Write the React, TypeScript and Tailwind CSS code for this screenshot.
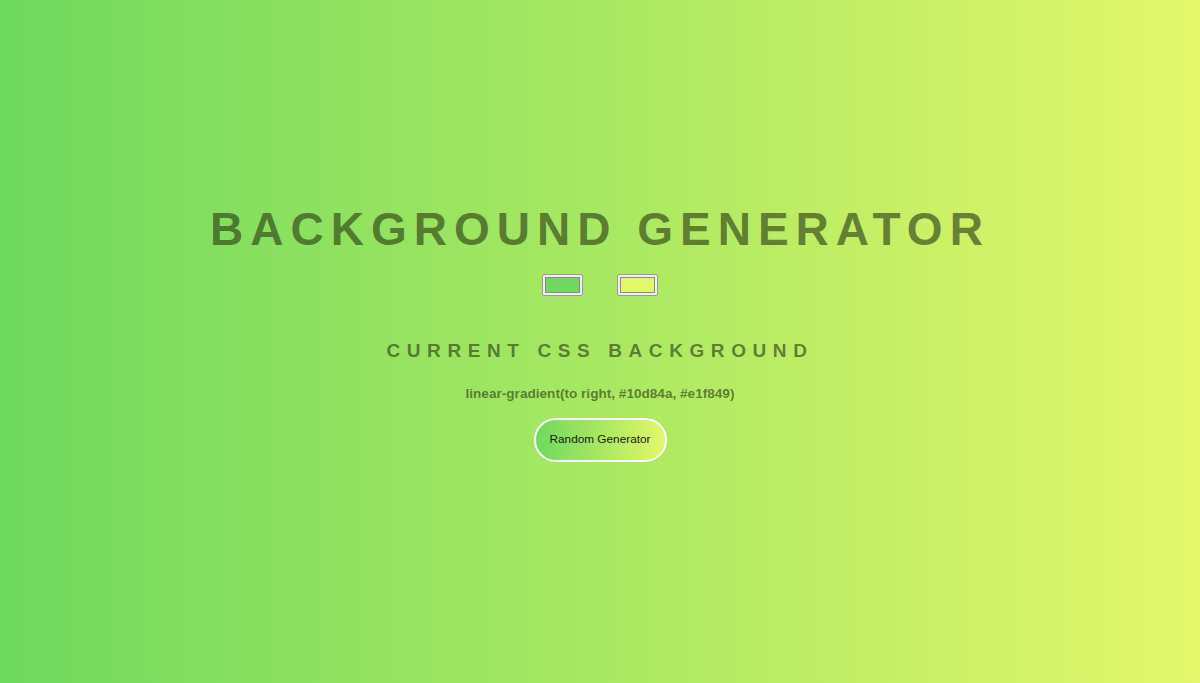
import React, { useState } from "react";

export default function App() {
  const [from] = useState("#6fd95f");
  const [to] = useState("#e3f76a");

  return (
    <div
      className="w-full h-[683px] flex flex-col items-center pt-[203px] bg-gradient-to-r from-[#6dd95e] via-[#a8e862] to-[#e4f76b]"
      style={{ fontFamily: '"Liberation Sans", Arial, sans-serif' }}
    >
      <h1 className="text-[46px] leading-[52px] font-bold tracking-[7px] text-[rgba(45,62,20,0.64)]">
        BACKGROUND GENERATOR
      </h1>
      <div className="flex gap-[34px] mt-[19px]">
        <div className="w-[41px] h-[22px] border border-[#9a9a9a] rounded-[2px] bg-[#efefef] p-[2px]">
          <div className="w-full h-full border border-[#8a8a8a]" style={{ background: from }} />
        </div>
        <div className="w-[41px] h-[22px] border border-[#9a9a9a] rounded-[2px] bg-[#efefef] p-[2px]">
          <div className="w-full h-full border border-[#8a8a8a]" style={{ background: to }} />
        </div>
      </div>
      <h3 className="mt-[43px] text-[19px] leading-[24px] font-bold tracking-[6.6px] text-[rgba(45,62,20,0.64)]">
        CURRENT CSS BACKGROUND
      </h3>
      <p className="mt-[22px] text-[13.6px] leading-[18px] font-bold text-[rgba(45,62,20,0.64)]">
        linear-gradient(to right, #10d84a, #e1f849)
      </p>
      <button
        className="mt-[15px] w-[133px] h-[44px] rounded-full border-2 border-white text-[11.8px] text-[#1a1a1a] bg-gradient-to-r from-[#6dd95e] via-[#a8e862] to-[#e4f76b]"
      >
        Random Generator
      </button>
    </div>
  );
}
